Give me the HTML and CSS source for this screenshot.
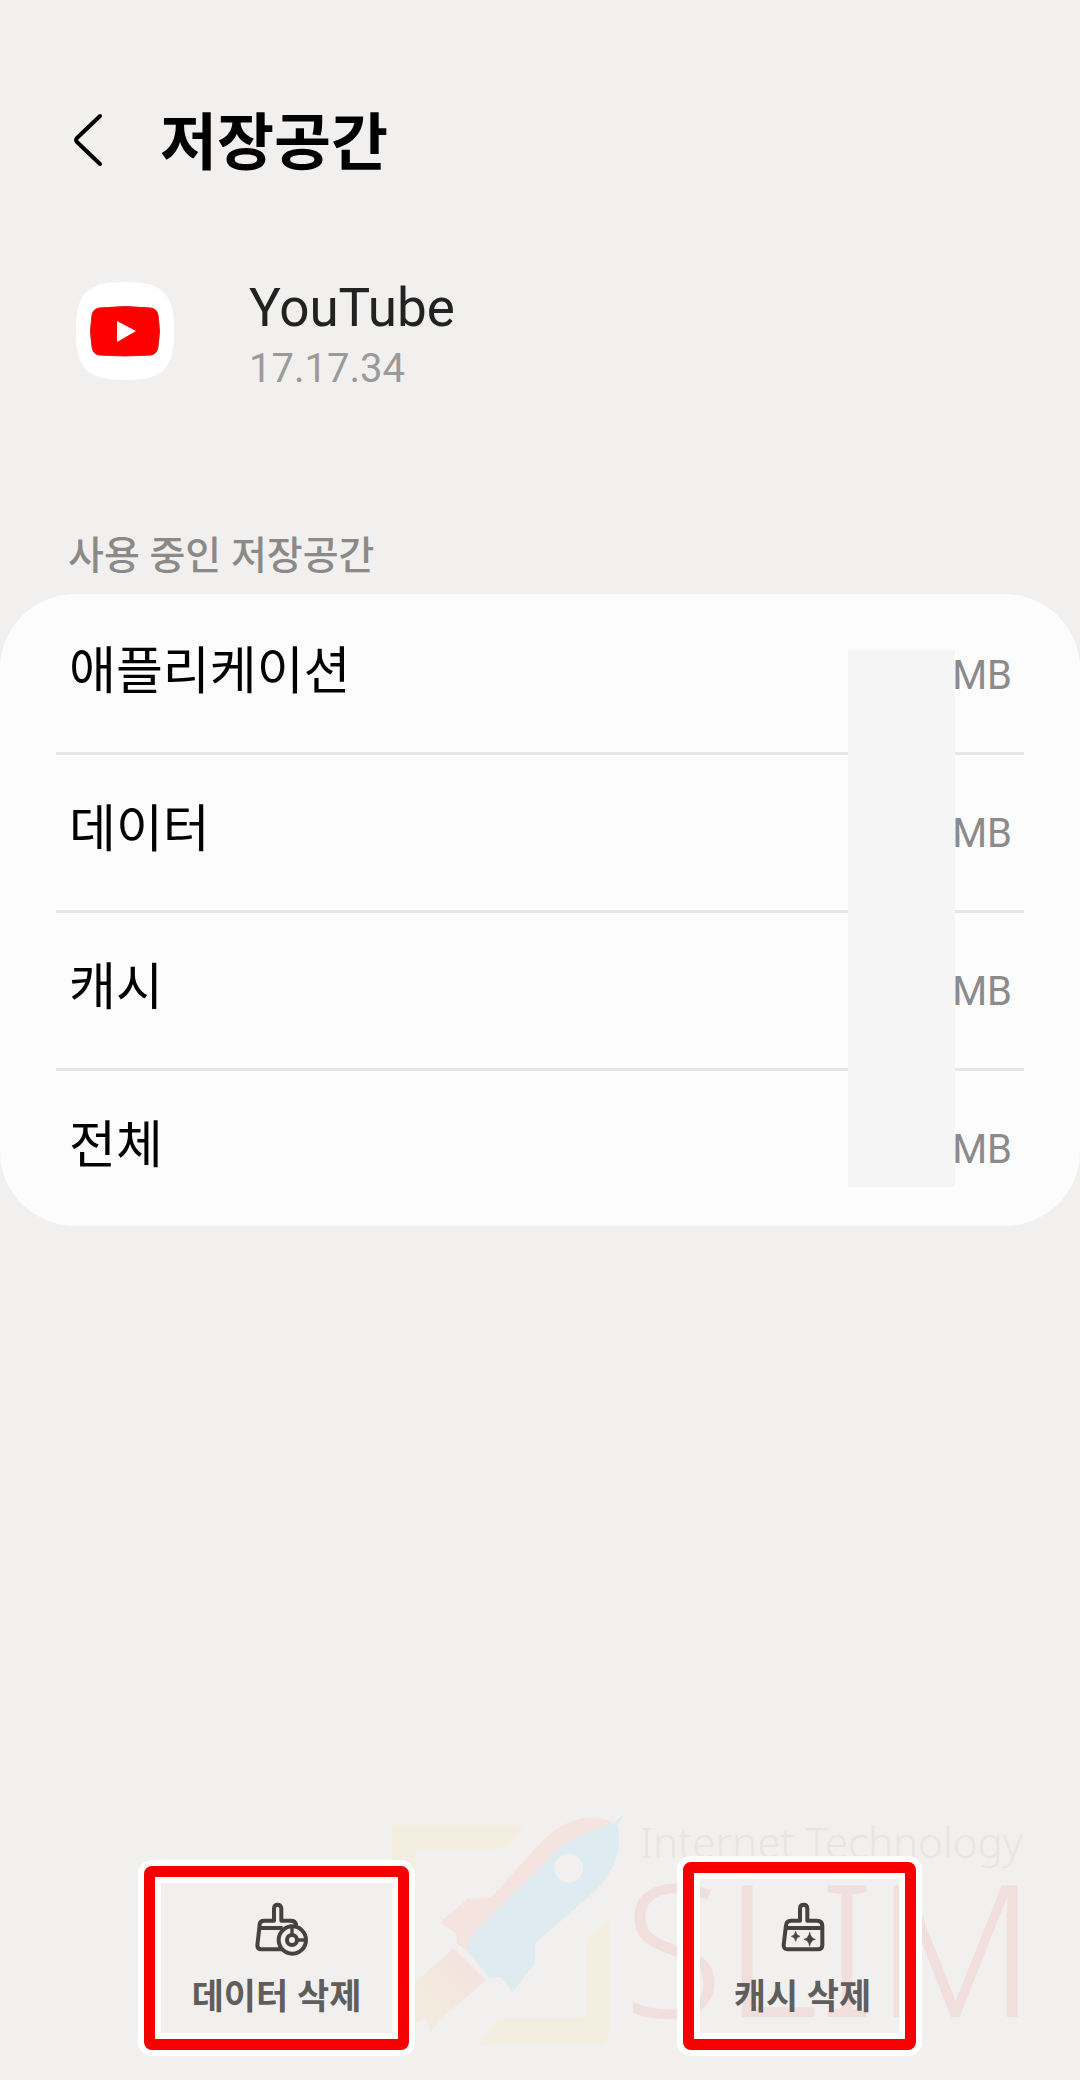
FILE: index.html
```html
<!DOCTYPE html>
<html lang="ko">
<head>
  <title>저장공간</title>
  <meta charset="UTF-8">
  <meta name="viewport" content="width=device-width, initial-scale=1">
  <link rel="stylesheet" href="styles.css">
</head>
<body>
  <header class="header">
    <button class="back" type="button" aria-label="뒤로">
      <svg width="32" height="60" viewBox="0 0 32 60">
        <path d="M28 4 L5 26 Q3 28 5 30 L28 52" fill="none" stroke="#000" stroke-width="4" stroke-linecap="round"/>
      </svg>
    </button>
    <h1>저장공간</h1>
  </header>

  <main>
    <section class="app">
      <svg class="app-icon" width="100" height="100" viewBox="0 0 100 100">
        <path d="M50 1 C88 1 99 12 99 50 C99 88 88 99 50 99 C12 99 1 88 1 50 C1 12 12 1 50 1 Z" fill="#fff"/>
        <path d="M24 27 Q50 24 76 27 Q82 28 83 34 Q86 50 83 66 Q82 73 76 74 Q50 76 24 74 Q18 73 17 66 Q14 50 17 34 Q18 28 24 27 Z" fill="#f00" stroke="#d8201c" stroke-width="1"/>
        <path d="M42 40 L61 50 L42 61 Z" fill="#fff"/>
      </svg>
      <div>
        <p class="app-name">YouTube</p>
        <p class="app-version">17.17.34</p>
      </div>
    </section>

    <h2>사용 중인 저장공간</h2>
    <div class="card">
      <dl>
        <div class="row"><dt>애플리케이션</dt><dd>MB</dd></div>
        <div class="row"><dt>데이터</dt><dd>MB</dd></div>
        <div class="row"><dt>캐시</dt><dd>MB</dd></div>
        <div class="row"><dt>전체</dt><dd>MB</dd></div>
      </dl>
      <div class="mask"></div>
    </div>
  </main>

  <footer class="footer">
    <div class="watermark">
      <svg width="240" height="240" viewBox="30 30 720 720">
        <path d="M36 75 H430 Q390 148 350 148 H108 V260 H36 Z" fill="#f4eee0"/>
        <path d="M688 362 V690 Q688 735 640 735 H300 Q340 655 380 655 H600 Q622 655 622 632 V420 Q640 395 688 362 Z" fill="#f4eee0"/>
        <path d="M700 68 C630 35 560 55 490 120 L335 290 Q300 298 265 295 L182 365 L230 402 V430 L262 455 L330 360 L560 130 Z" fill="#f4e3df"/>
        <path d="M700 70 L732 42 L712 75 C730 150 700 230 625 290 L465 430 V490 L398 575 L360 530 L328 535 L264 455 Q265 420 290 390 L510 175 Q545 120 700 70 Z" fill="#deebf1"/>
        <path d="M222 445 L318 540 L185 655 L150 700 L140 655 L100 670 V550 Z" fill="url(#flame)"/>
        <circle cx="566" cy="205" r="43" fill="#f1f0ee"/>
        <defs>
          <linearGradient id="flame" x1="1" y1="0" x2="0" y2="1">
            <stop offset="0.3" stop-color="#f4e4df"/>
            <stop offset="0.7" stop-color="#f3ebdd"/>
          </linearGradient>
        </defs>
      </svg>
      <div class="watermark-text">
        <span class="tagline">Internet Technology</span>
        <span class="brand">SLIM</span>
      </div>
    </div>

    <div class="action">
      <button class="clear" type="button">
        <svg width="56" height="56" viewBox="26 30 168 168" fill="none" stroke="#444342" stroke-width="12" stroke-linejoin="round">
          <path d="M170 106 V103 Q168 92 154 92 H126 V55 Q124 44 115 44 Q105 44 104 55 V92 H76 Q62 92 61 103 L60 114 H130 M60 114 L54 166 Q54 178 66 178 H130"/>
          <circle cx="159" cy="150" r="41"/>
          <circle cx="158" cy="150" r="15"/>
          <path d="M158 135 V110 M173 150 H199" stroke-width="10"/>
        </svg>
        데이터 삭제
      </button>
    </div>
    <div class="action">
      <button class="clear clear-cache" type="button">
        <svg width="56" height="56" viewBox="46 30 168 168" fill="none" stroke="#444342" stroke-width="12" stroke-linejoin="round">
          <path d="M78 114 L79 106 Q80 92 94 92 H121 V55 Q122 44 132 44 Q142 44 143 55 V92 H171 Q188 92 188 108 V165 Q188 178 175 178 H84 Q71 178 72 165 Z M78 114 H188"/>
          <path d="M108 124 Q110 137 121 139 Q110 141 108 154 Q106 141 95 139 Q106 137 108 124 Z M150 127 Q153 145 167 148 Q153 151 150 169 Q147 151 133 148 Q147 145 150 127 Z" fill="#444342" stroke="#444342" stroke-width="2"/>
        </svg>
        캐시 삭제
      </button>
    </div>
  </footer>
</body>
</html>
```

FILE: styles.css
```css
* {
  box-sizing: border-box;
}
body {
  margin: 0;
  min-height: 100vh;
  display: flex;
  flex-direction: column;
  background-color: #f1f0ee;
  font-family: Roboto, "Noto Sans CJK KR", sans-serif;
  color: #000;
}
h1, h2, p, dl, dd {
  margin: 0;
}
button {
  margin: 0;
  background: none;
  font-family: inherit;
  cursor: pointer;
}
svg {
  display: block;
  overflow: visible;
}

.header {
  display: flex;
  align-items: center;
  gap: 56px;
  padding: 96px 72px 0;
}
.back {
  padding: 0;
  border: none;
}
h1 {
  padding-top: 4px;
  font-size: 62px;
  line-height: 88px;
  font-weight: 700;
}

.app {
  display: flex;
  align-items: flex-start;
  gap: 74px;
  padding: 93px 75px 0;
}
.app-name {
  color: #222;
  font-size: 53px;
  line-height: 54px;
}
.app-version {
  color: #9b9a99;
  font-size: 40px;
  line-height: 68px;
}

h2 {
  padding: 125px 68px 10px;
  color: #8b8a89;
  font-size: 39px;
  line-height: 56px;
  font-weight: 500;
}
.card {
  position: relative;
  padding: 0 56px;
  border-radius: 75px;
  background-color: #fcfcfc;
}
.row {
  display: flex;
  justify-content: space-between;
  align-items: center;
  height: 158px;
  padding: 0 12px 6px 13px;
  border-top: 3px solid #e6e6e6;
}
.row:first-child {
  border-top-color: transparent;
}
dt {
  font-size: 51px;
  line-height: 72px;
}
dd {
  padding-top: 8px;
  color: #8b8b8b;
  font-size: 40px;
  line-height: 56px;
}
.mask {
  position: absolute;
  top: 56px;
  right: 125px;
  bottom: 39px;
  width: 107px;
  background-color: #f5f5f5;
}

.footer {
  position: relative;
  display: grid;
  grid-template-columns: 1fr 1fr;
  align-items: end;
  margin-top: auto;
  padding: 0 19px 30px 15px;
}
.action {
  display: flex;
  justify-content: center;
}
.clear {
  position: relative;
  display: flex;
  flex-direction: column;
  align-items: center;
  gap: 22px;
  padding: 23px 37px 21px;
  border: 11px solid #f60000;
  border-radius: 8px;
  box-shadow: 0 0 0 6px #fff, inset 0 0 0 6px #fff;
  color: #5f5e5d;
  font-size: 35px;
  line-height: 40px;
  font-weight: 700;
}
.clear-cache {
  padding: 27px 34px 21px 40px;
}

.watermark {
  position: absolute;
  right: 50px;
  bottom: 30px;
  display: flex;
}
.watermark-text {
  display: flex;
  flex-direction: column;
  width: 400px;
  padding-top: 4px;
  font-family: "Noto Sans", sans-serif;
  font-weight: 300;
  white-space: nowrap;
}
.tagline {
  padding-left: 10px;
  color: #e7e6e5;
  font-size: 42px;
  line-height: 56px;
}
.brand {
  margin-left: -7px;
  color: #f1dfde;
  font-size: 184px;
  line-height: 152px;
}
```
